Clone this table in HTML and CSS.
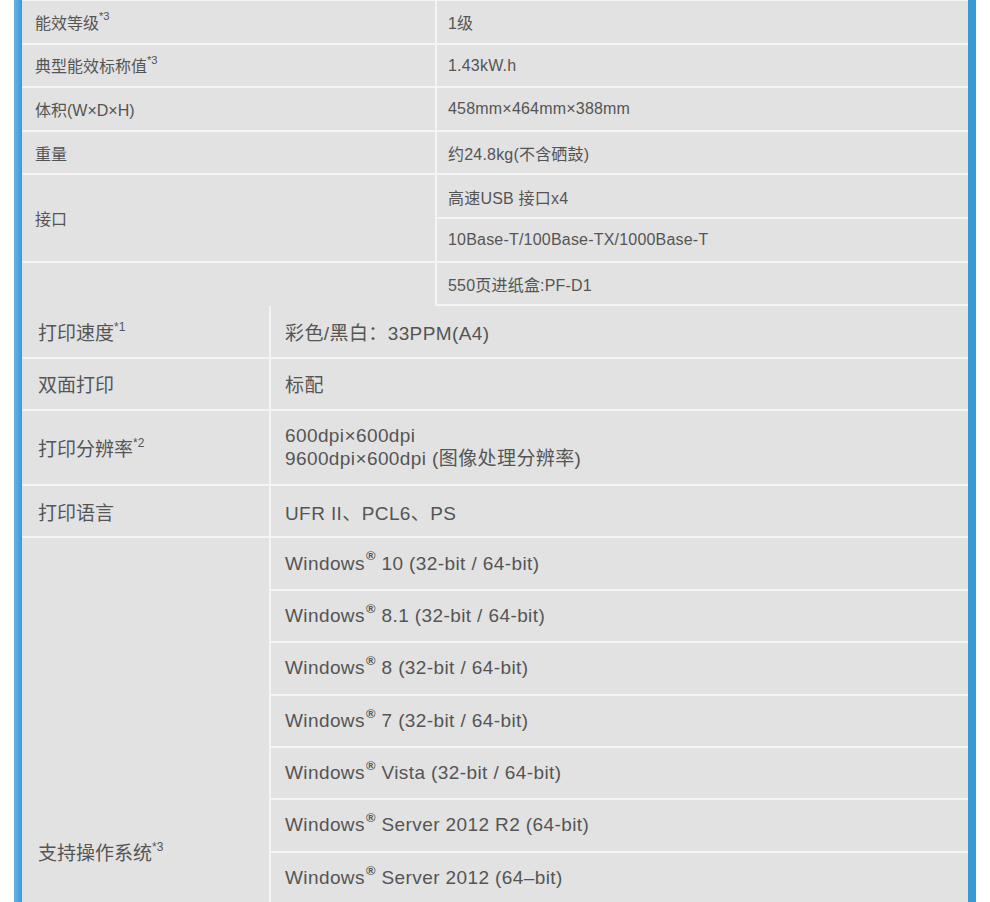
FILE: index.html
```html
<!DOCTYPE html>
<html lang="zh-CN">
<head>
  <meta charset="UTF-8" />
  <meta name="viewport" content="width=device-width, initial-scale=1.0"/>
  <title>产品规格</title>
  <link rel="stylesheet" href="styles.css">
</head>
<body>

  <div class="page">

    <!-- 基本参数 -->
    <div class="spec-upper">
      <div class="cell label"><span>能效等级<sup>*3</sup></span></div>
      <div class="cell value"><span>1级</span></div>

      <div class="cell label"><span>典型能效标称值<sup>*3</sup></span></div>
      <div class="cell value"><span>1.43kW.h</span></div>

      <div class="cell label"><span>体积(W×D×H)</span></div>
      <div class="cell value"><span>458mm×464mm×388mm</span></div>

      <div class="cell label"><span>重量</span></div>
      <div class="cell value"><span>约24.8kg(不含硒鼓)</span></div>

      <div class="cell label span-2"><span>接口</span></div>
      <div class="cell value"><span>高速USB 接口x4</span></div>
      <div class="cell value"><span>10Base-T/100Base-TX/1000Base-T</span></div>

      <div class="cell label"></div>
      <div class="cell value last"><span>550页进纸盒:PF-D1</span></div>
    </div>

    <!-- 打印 -->
    <div class="spec-lower">
      <div class="cell label"><span>打印速度<sup>*1</sup></span></div>
      <div class="cell value"><span>彩色/黑白：33PPM(A4)</span></div>

      <div class="cell label"><span>双面打印</span></div>
      <div class="cell value"><span>标配</span></div>

      <div class="cell label"><span>打印分辨率<sup>*2</sup></span></div>
      <div class="cell value two-line"><span>600dpi×600dpi<br>9600dpi×600dpi (图像处理分辨率)</span></div>

      <div class="cell label"><span>打印语言</span></div>
      <div class="cell value"><span>UFR II、PCL6、PS</span></div>

      <div class="cell label span-os"><span>支持操作系统<sup>*3</sup></span></div>
      <div class="cell value"><span>Windows<sup class="reg">®</sup> 10 (32-bit / 64-bit)</span></div>
      <div class="cell value"><span>Windows<sup class="reg">®</sup> 8.1 (32-bit / 64-bit)</span></div>
      <div class="cell value"><span>Windows<sup class="reg">®</sup> 8 (32-bit / 64-bit)</span></div>
      <div class="cell value"><span>Windows<sup class="reg">®</sup> 7 (32-bit / 64-bit)</span></div>
      <div class="cell value"><span>Windows<sup class="reg">®</sup> Vista (32-bit / 64-bit)</span></div>
      <div class="cell value"><span>Windows<sup class="reg">®</sup> Server 2012 R2 (64-bit)</span></div>
      <div class="cell value"><span>Windows<sup class="reg">®</sup> Server 2012 (64–bit)</span></div>
      <div class="cell value"><span>Windows<sup class="reg">®</sup> Server 2008 R2 (64-bit)</span></div>
      <div class="cell value"><span>Windows<sup class="reg">®</sup> Server 2008 (32-bit / 64-bit)</span></div>
      <div class="cell value"><span>Windows<sup class="reg">®</sup> Server 2003 R2 (32-bit / 64-bit)</span></div>
      <div class="cell value"><span>Mac OS X 10.6.8 或更高版本</span></div>
      <div class="cell value"><span>Linux</span></div>
    </div>

  </div>

</body>
</html>
```

FILE: styles.css
```css
* {
  box-sizing: border-box;
}

html,
body {
  margin: 0;
  padding: 0;
  background-color: #ffffff;
}

body {
  font-family: 'Liberation Sans', 'Noto Sans CJK SC', sans-serif;
  color: #555555;
  height: 902px;
  overflow: hidden;
}

.page {
  width: 962px;
  margin-left: 14px;
  padding: 0 8px;
  background: linear-gradient(to right, #66b3e6 0, #3d98d7 8px, #3899d5 8px);
}

.cell {
  display: flex;
  align-items: center;
  background-color: #e2e2e2;
}

sup {
  font-size: 0.7em;
  line-height: 0;
  position: relative;
  top: -0.75em;
  vertical-align: baseline;
}

/* upper block */

.spec-upper {
  display: grid;
  grid-template-columns: 413px 531px;
  grid-template-rows: repeat(6, 41.6px) 43.6px;
  column-gap: 2px;
  row-gap: 2px;
  padding-top: 1px;
  background-color: #f4f4f4;
  font-size: 16px;
}

.spec-upper .label {
  padding-left: 13px;
}

.spec-upper .value {
  padding-left: 11px;
  padding-top: 1px;
  letter-spacing: 0.2px;
}

.spec-upper .span-2 {
  grid-row: span 2;
}

.spec-upper .last {
  border-bottom: 2px solid #f4f4f4;
}

/* lower block */

.spec-lower {
  display: grid;
  grid-template-columns: 247px 697px;
  grid-template-rows: 50.4px 50.4px 73px 50.4px;
  grid-auto-rows: 50.4px;
  column-gap: 2px;
  row-gap: 2px;
  background-color: #f4f4f4;
  font-size: 19px;
}

.spec-lower .label {
  padding-left: 16px;
}

.spec-lower .value {
  padding-left: 14px;
  letter-spacing: 0.4px;
}

.spec-lower .two-line {
  line-height: 23px;
}

.spec-lower .span-os {
  grid-row: span 12;
}

.spec-lower sup {
  font-size: 0.63em;
}

.spec-lower .reg {
  font-size: 0.68em;
  font-weight: bold;
  top: -0.7em;
  margin-left: 1px;
}
```
